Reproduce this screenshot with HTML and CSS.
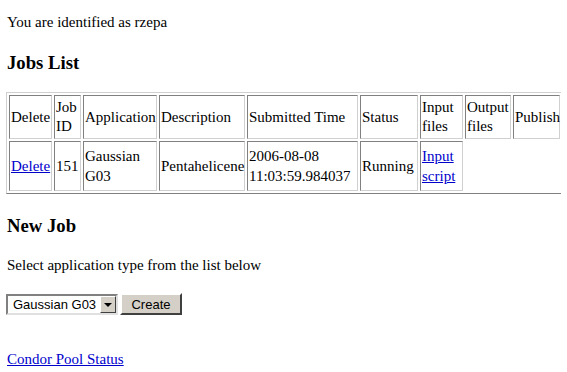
FILE: index.html
```
<!DOCTYPE html>
<html lang="en">
<head>
    <meta charset="UTF-8">
    <title>Jobs</title>
    <link rel="stylesheet" href="styles.css">
</head>
<body>

    <p class="ident">You are identified as rzepa</p>

    <h3>Jobs List</h3>
    <table class="jobs">
        <tr class="head-row">
            <td class="c-delete">Delete</td>
            <td class="c-id">Job ID</td>
            <td class="c-app">Application</td>
            <td class="c-desc">Description</td>
            <td class="c-time">Submitted Time</td>
            <td class="c-status">Status</td>
            <td class="c-input">Input files</td>
            <td class="c-output">Output files</td>
            <td class="c-publish">Publish</td>
        </tr>
        <tr class="job-row">
            <td><a href="#">Delete</a></td>
            <td>151</td>
            <td>Gaussian G03</td>
            <td>Pentahelicene</td>
            <td>2006-08-08 11:03:59.984037</td>
            <td>Running</td>
            <td><a href="#">Input script</a></td>
        </tr>
    </table>

    <h3 class="new-title">New Job</h3>
    <p class="hint">Select application type from the list below</p>

    <form class="new-job">
        <span class="select-wrap">
            <select class="app-select">
                <option>Gaussian G03</option>
            </select>
            <span class="select-arrow"></span>
        </span>
        <button type="button" class="create-btn">Create</button>
    </form>

    <p class="pool"><a href="#">Condor Pool Status</a></p>

</body>
</html>
```

FILE: styles.css
```
body {
    font-family: "Liberation Serif", "Times New Roman", serif;
    font-size: 15px;
    line-height: 19px;
    margin: 0 6px;
    background: #ffffff;
    color: #000000;
}

a {
    color: #0000cc;
}

p {
    margin: 0;
}

.ident {
    margin-top: 13px;
    padding-left: 1px;
}

h3 {
    font-size: 18.7px;
    line-height: 22px;
    margin: 20px 0 18px;
    padding-left: 1px;
}

.new-title {
    margin-top: 21px;
}

.hint {
    margin-top: 19px;
    padding-left: 1px;
}

/* jobs table, old style border="1" look */
.jobs {
    table-layout: fixed;
    width: 557px;
    border: 1px solid;
    border-color: #d0d0d0 #808080 #808080 #d0d0d0;
    border-spacing: 2px;
}

.jobs td {
    box-sizing: border-box;
    border: 1px solid;
    border-color: #808080 #d0d0d0 #d0d0d0 #808080;
    padding: 2px 1px;
    overflow: visible;
}

.head-row {
    height: 44px;
}

.job-row td {
    line-height: 20px;
    padding: 4px 1px;
}

.c-delete { width: 43px; }
.c-id { width: 27px; }
.c-app { width: 74px; }
.c-desc { width: 86px; }
.c-time { width: 111px; }
.c-status { width: 58px; }
.c-input { width: 43px; }
.c-output { width: 46px; }
.c-publish { width: 47px; }

.new-job {
    display: flex;
    align-items: center;
    gap: 2px;
    margin-top: 18px;
}

.select-wrap {
    position: relative;
    display: inline-block;
}

.app-select {
    appearance: none;
    display: block;
    font-family: "Liberation Sans", Arial, sans-serif;
    font-size: 13px;
    color: #000000;
    width: 112px;
    height: 21px;
    padding: 0 20px 0 5px;
    border: 2px solid;
    border-color: #808080 #e0e0e0 #e0e0e0 #808080;
    background: #ffffff;
    border-radius: 0;
}

.select-arrow {
    position: absolute;
    right: 2px;
    top: 2px;
    width: 14px;
    height: 15px;
    background: #d4d0c8;
    border: 1px solid;
    border-color: #ffffff #404040 #404040 #ffffff;
}

.select-arrow::after {
    content: "";
    position: absolute;
    left: 3px;
    top: 6px;
    border-left: 4px solid transparent;
    border-right: 4px solid transparent;
    border-top: 4px solid #000000;
}

.create-btn {
    font-family: "Liberation Sans", Arial, sans-serif;
    font-size: 13px;
    color: #000000;
    height: 22px;
    width: 62px;
    background: #d4d0c8;
    border: 2px solid;
    border-color: #ffffff #404040 #404040 #ffffff;
    border-radius: 0;
    padding: 0;
}

.pool {
    margin-top: 35px;
    padding-left: 1px;
}
```
